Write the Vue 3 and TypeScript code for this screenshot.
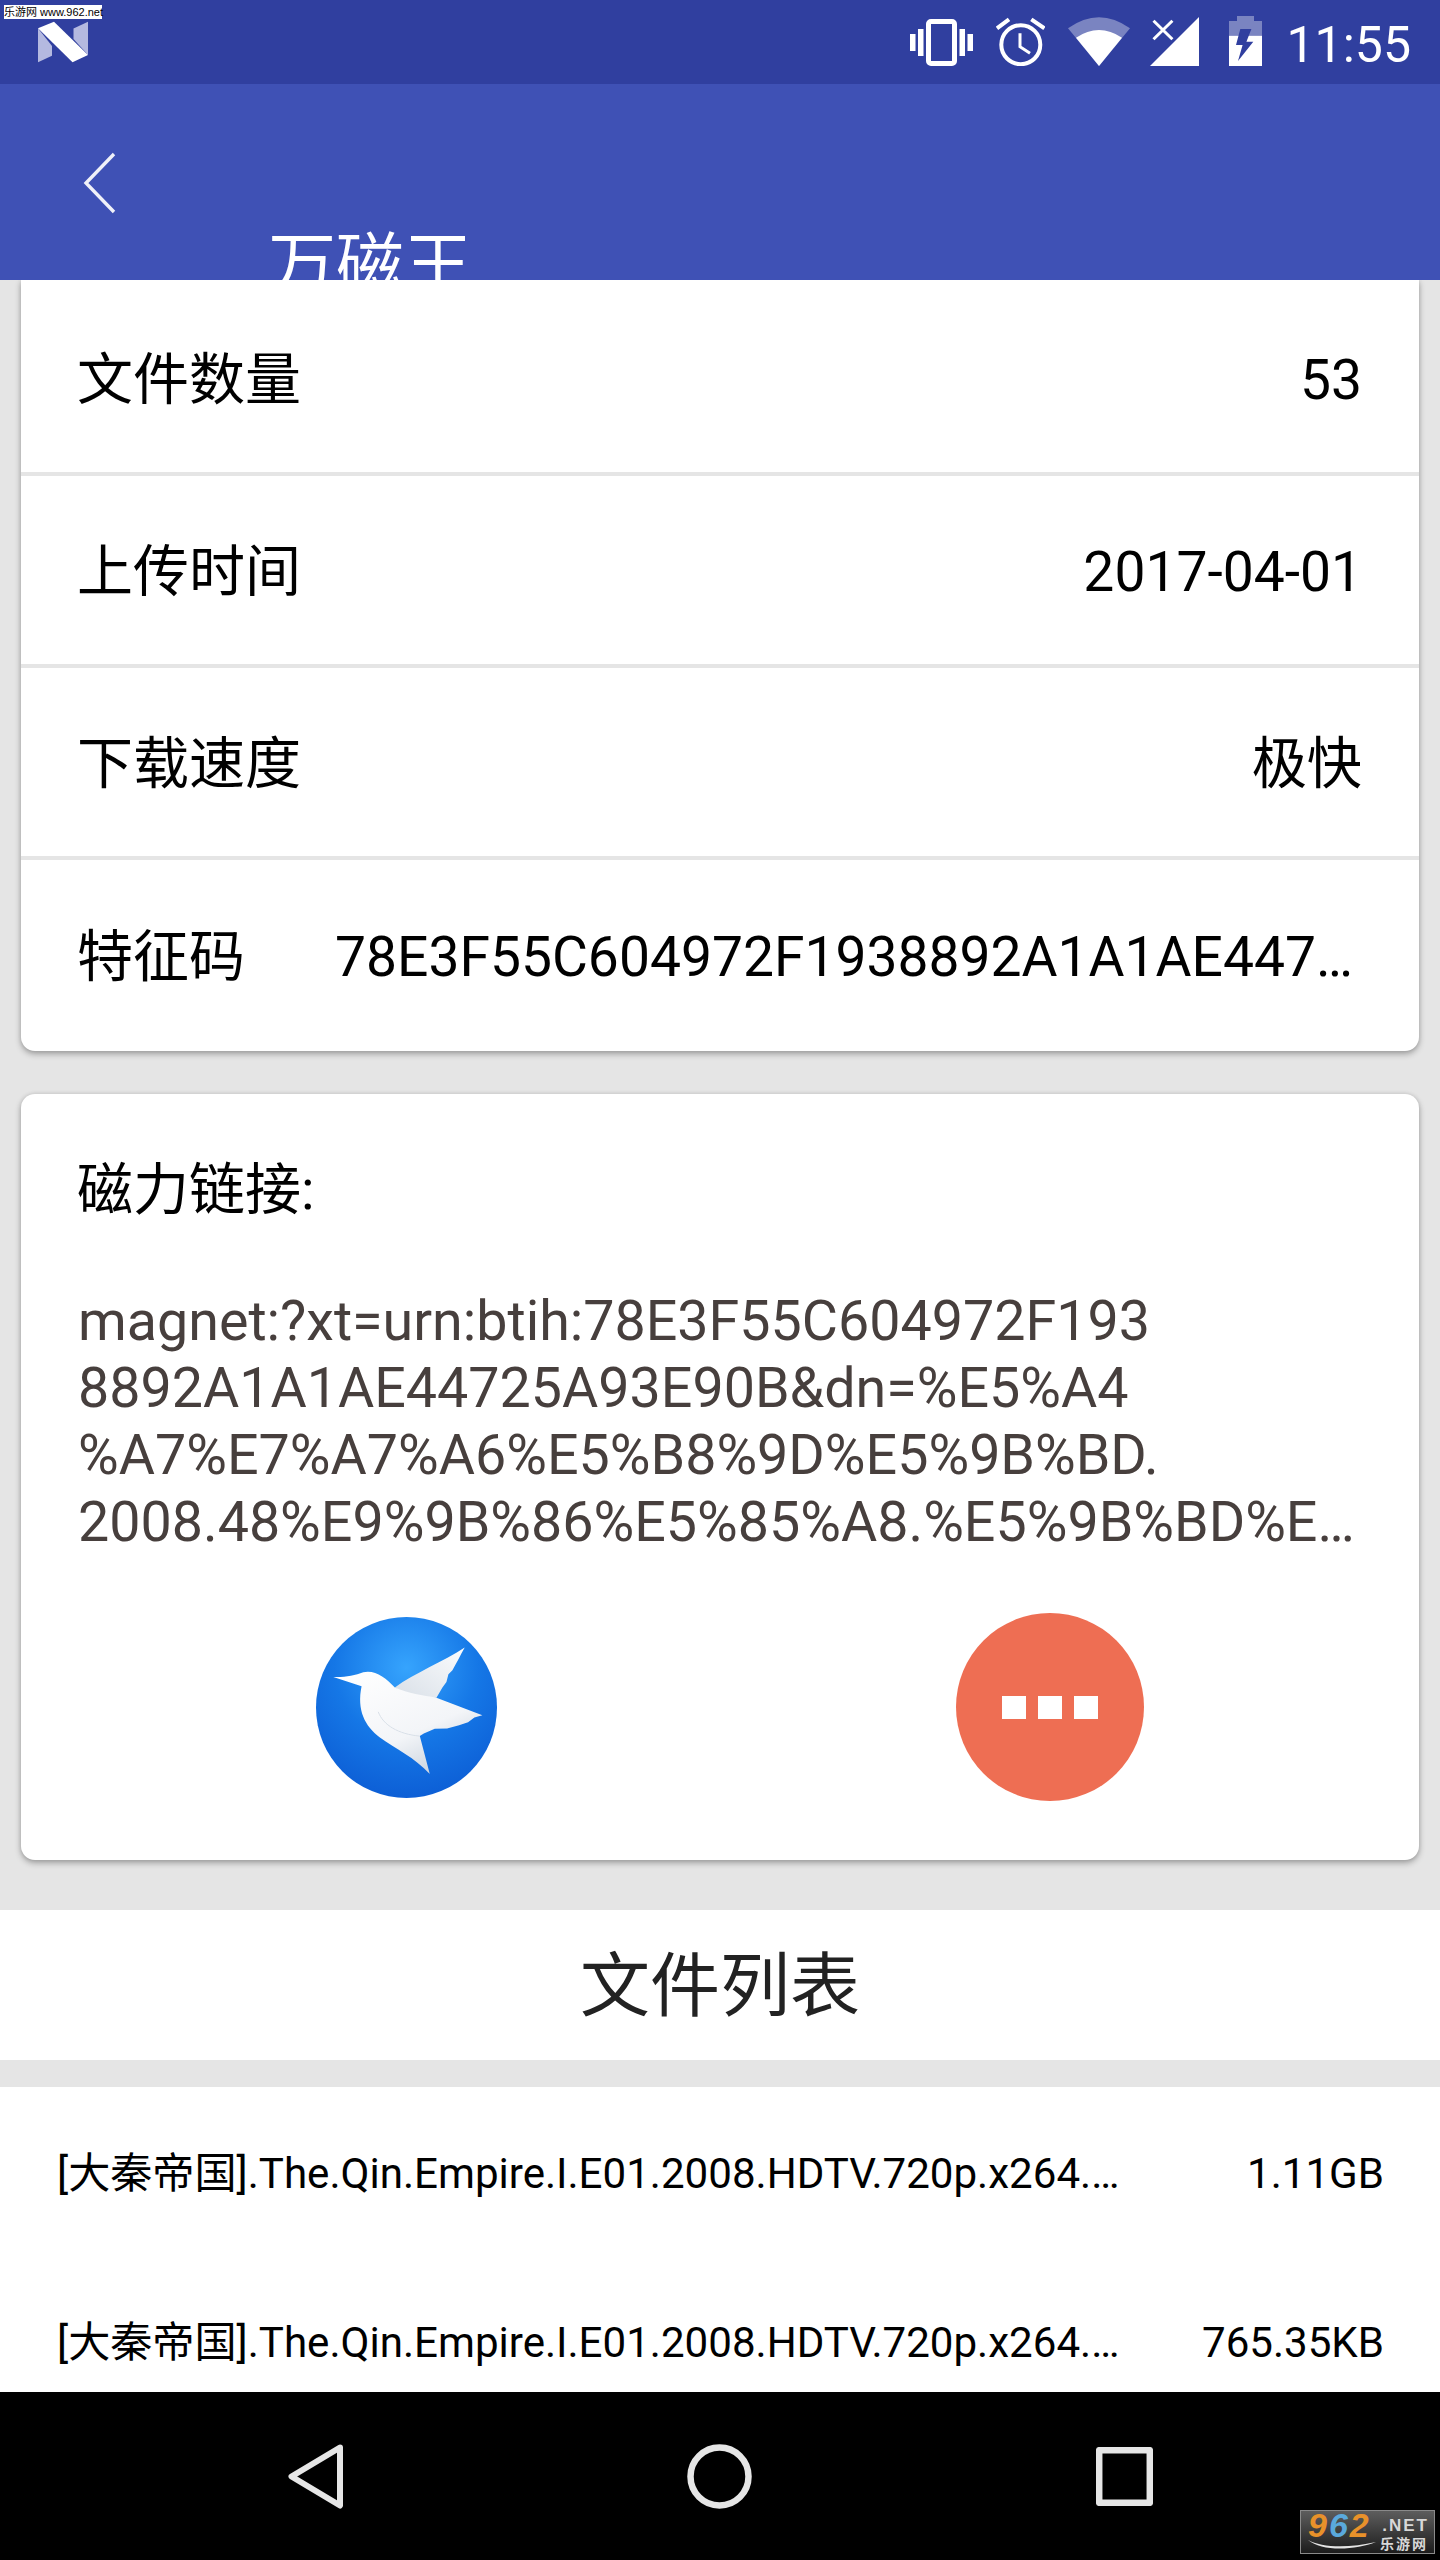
<script setup lang="ts">
interface InfoRow {
  label: string;
  value: string;
}

interface FileRow {
  name: string;
  size: string;
}

const infoRows: InfoRow[] = [
  { label: '文件数量', value: '53' },
  { label: '上传时间', value: '2017-04-01' },
  { label: '下载速度', value: '极快' },
  { label: '特征码', value: '78E3F55C604972F1938892A1A1AE44725A93E90B' },
];

const magnetLines = [
  'magnet:?xt=urn:btih:78E3F55C604972F193',
  '8892A1A1AE44725A93E90B&dn=%E5%A4',
  '%A7%E7%A7%A6%E5%B8%9D%E5%9B%BD.',
  '2008.48%E9%9B%86%E5%85%A8.%E5%9B%BD%E…',
];

const files: FileRow[] = [
  { name: '[大秦帝国].The.Qin.Empire.I.E01.2008.HDTV.720p.x264.AAC.mkv', size: '1.11GB' },
  { name: '[大秦帝国].The.Qin.Empire.I.E01.2008.HDTV.720p.x264.AAC.nfo', size: '765.35KB' },
];
</script>

<template>
  <div class="page">
    <div class="status-bar">
      <div class="mark">乐游网 www.962.net</div>
      <svg class="n-logo" width="50" height="42" viewBox="0 0 50 42">
        <path d="M0 7.3 14 25V34.7L0 41.3Z" fill="#b4b9e0" />
        <path d="M50 .7 35.5 7.5V18L50 34Z" fill="#b4b9e0" />
        <path d="M0 7.3 16 .7 50 34 34.5 41.3Z" fill="#fff" />
      </svg>
      <div class="status-icons">
        <svg class="ic-vibrate" width="63" height="47" viewBox="0 0 63 47" fill="#fff">
          <rect x="0" y="15" width="5.5" height="17" />
          <rect x="8" y="10" width="5.5" height="27" />
          <rect x="18.5" y="2.5" width="26" height="42" rx="2.5" fill="none" stroke="#fff" stroke-width="5" />
          <rect x="49.5" y="10" width="5.5" height="27" />
          <rect x="57.5" y="15" width="5.5" height="17" />
        </svg>
        <svg class="ic-alarm" width="49" height="49" viewBox="0 0 49 49" fill="none" stroke="#fff" stroke-width="4">
          <circle cx="24.8" cy="27.7" r="19.5" />
          <path d="M1 11.3 13 2.3M35.3 2.3 48.4 11.3" />
          <path d="M24 16.3V29.7L34 36.3" stroke-width="3" />
        </svg>
        <svg class="ic-wifi" width="62" height="49" viewBox="0 0 62 49">
          <path d="M0 11.3Q31-10.7 62 11.3L31 49Z" fill="#fff" fill-opacity=".36" />
          <path d="M8 20.7Q31 5.3 54 20.7L31 49Z" fill="#fff" />
        </svg>
        <svg class="ic-signal" width="49" height="49" viewBox="0 0 49 49">
          <path d="M0 49 49 0V49Z" fill="#fff" />
          <path d="M3.5 3.7 22.4 22.3M22.4 3.7 3.5 22.3" stroke="#fff" stroke-width="3" />
        </svg>
        <svg class="ic-battery" width="33" height="50" viewBox="0 0 33 50">
          <path d="M8 0H25V5H33V19.7H0V5H8Z" fill="#fff" fill-opacity=".36" />
          <path d="M0 19.7H33V50H0Z" fill="#fff" />
          <path d="M11.3 13H22.4L17.4 25.7H24.3L9 45 13.6 29H7Z" fill="#303f9f" />
        </svg>
        <span class="clock">11:55</span>
      </div>
    </div>

    <div class="app-bar">
      <svg class="back" width="34" height="62" viewBox="0 0 34 62" fill="none" stroke="#fff" stroke-width="3.4" stroke-opacity=".92">
        <path d="M31 2 3 31 31 60" />
      </svg>
      <div class="app-title">万磁王</div>
    </div>

    <div class="card info-card">
      <div v-for="row in infoRows" :key="row.label" class="info-row">
        <span class="info-label">{{ row.label }}</span>
        <span class="info-value">{{ row.value }}</span>
      </div>
    </div>

    <div class="card magnet-card">
      <div class="magnet-title">磁力链接:</div>
      <div class="magnet-text">
        <div v-for="line in magnetLines" :key="line">{{ line }}</div>
      </div>
      <div class="magnet-actions">
        <svg class="bird" width="181" height="181" viewBox="48 50 544 544">
          <defs>
            <radialGradient id="birdBg" cx="50%" cy="28%" r="72%">
              <stop offset="0" stop-color="#36a4fd" />
              <stop offset=".55" stop-color="#1577e6" />
              <stop offset="1" stop-color="#0d5fd6" />
            </radialGradient>
            <linearGradient id="birdBody" x1=".1" y1="0" x2=".75" y2="1">
              <stop offset="0" stop-color="#ffffff" />
              <stop offset=".62" stop-color="#f3f5f8" />
              <stop offset="1" stop-color="#c6d0dc" />
            </linearGradient>
            <linearGradient id="birdWing" x1="1" y1="0" x2="0" y2="1">
              <stop offset="0" stop-color="#fbfcfd" />
              <stop offset="1" stop-color="#d8dfe7" />
            </linearGradient>
          </defs>
          <circle cx="320" cy="322" r="272" fill="url(#birdBg)" />
          <path d="M285 262C345 218 430 185 495 142C482 165 470 190 458 210L446 222 440 245 428 262 410 293 340 300Z" fill="url(#birdWing)" />
          <path d="M100 230C130 232 165 226 190 216C225 208 258 232 285 262C325 280 370 285 410 293L548 345 524 352 505 366 478 375 442 385 405 386 372 400 360 408 390 522C345 472 285 445 240 412C195 378 170 330 185 258Z" fill="url(#birdBody)" />
          <path d="M235 335C250 375 295 402 360 408" fill="none" stroke="#d9e0e8" stroke-width="3" />
        </svg>
        <div class="more-btn">
          <i></i><i></i><i></i>
        </div>
      </div>
    </div>

    <div class="list-title">文件列表</div>

    <div class="file-list">
      <div v-for="file in files" :key="file.name" class="file-row">
        <span class="file-name">{{ file.name }}</span>
        <span class="file-size">{{ file.size }}</span>
      </div>
    </div>

    <div class="nav-bar">
      <svg width="55" height="65" viewBox="0 0 55 65" fill="none" stroke="#e6e6e6" stroke-width="6" stroke-linejoin="round">
        <path d="M52 3.5 3.5 32.5 52 61.5Z" />
      </svg>
      <svg width="65" height="65" viewBox="0 0 65 65" fill="none" stroke="#e6e6e6" stroke-width="6.5">
        <circle cx="32.5" cy="32.5" r="29" />
      </svg>
      <svg width="57" height="59" viewBox="0 0 57 59" fill="none" stroke="#e6e6e6" stroke-width="6.5" stroke-linejoin="round">
        <rect x="3.2" y="3.2" width="50.6" height="52.6" />
      </svg>
      <div class="badge">
        <div class="badge-left">
          <span class="badge-num"><b class="o">9</b><b class="b">6</b><b class="o">2</b></span>
          <svg class="swoosh" width="68" height="10" viewBox="0 0 68 10">
            <path d="M0 0C14 8 42 8 68 2 48 10 14 12 0 0Z" fill="#e4e4e4" />
          </svg>
        </div>
        <div class="badge-side">
          <span class="badge-net">.NET</span>
          <span class="badge-cn">乐游网</span>
        </div>
      </div>
    </div>
  </div>
</template>

<style scoped>
.page {
  position: relative;
  width: 1440px;
  height: 2560px;
  display: flex;
  flex-direction: column;
  overflow: hidden;
  background: #e5e5e5;
  font-family: Roboto, "Noto Sans CJK SC", sans-serif;
  color: #000;
}

.status-bar {
  position: relative;
  height: 84px;
  flex: none;
  display: flex;
  justify-content: space-between;
  align-items: flex-start;
  padding: 21px 29px 0 38px;
  box-sizing: border-box;
  background: #303f9f;
}

.mark {
  position: absolute;
  left: 4px;
  top: 5px;
  width: 98px;
  height: 14px;
  background: #fff;
  color: #000;
  font-family: "Liberation Sans", "Noto Sans CJK SC", sans-serif;
  font-size: 11px;
  line-height: 14px;
  text-align: center;
  white-space: nowrap;
}

.status-icons {
  display: flex;
  align-items: flex-start;
  margin-top: -5px;
}

.ic-vibrate { margin-top: 3px; }
.ic-alarm { margin-top: 1px; margin-left: 23px; }
.ic-wifi { margin-top: 1px; margin-left: 23px; }
.ic-signal { margin-top: 1px; margin-left: 20px; }
.ic-battery { margin-left: 30px; }

.clock {
  margin-left: 24px;
  font-size: 50px;
  line-height: 58px;
  color: #fff;
}

.app-bar {
  position: relative;
  z-index: 2;
  height: 196px;
  flex: none;
  padding: 68px 0 0 83px;
  box-sizing: border-box;
  overflow: hidden;
  background: #3f51b5;
}

.back {
  display: block;
}

.app-title {
  margin: 14px 0 0 185px;
  font-size: 68px;
  line-height: 76px;
  color: #fff;
}

.card {
  flex: none;
  margin: 0 21px;
  background: #fff;
  box-shadow: 0 3px 6px rgba(0, 0, 0, 0.3), 0 0 4px rgba(0, 0, 0, 0.1);
}

.info-card {
  padding-top: 4px;
  border-radius: 0 0 14px 14px;
}

.info-row {
  height: 192px;
  box-sizing: border-box;
  display: flex;
  align-items: center;
  justify-content: space-between;
  gap: 90px;
  padding: 3px 57px 0 56px;
  border-bottom: 4px solid #e5e5e5;
  line-height: 66px;
}

.info-row:last-child {
  height: 191px;
  border-bottom: none;
}

.info-label {
  flex: none;
  font-size: 56px;
}

.info-value {
  min-width: 0;
  overflow: hidden;
  font-size: 55.2px;
  text-overflow: ellipsis;
  white-space: nowrap;
}

.magnet-card {
  margin-top: 43px;
  height: 766px;
  box-sizing: border-box;
  padding: 63px 48px 0 57px;
  border-radius: 14px;
}

.magnet-title {
  margin-left: -1px;
  font-size: 56px;
  line-height: 66px;
}

.magnet-text {
  margin-top: 65px;
  font-size: 55.6px;
  line-height: 67px;
  color: #473f3d;
  white-space: nowrap;
}

.magnet-actions {
  margin: 57px 0 0 7px;
  display: grid;
  grid-template-columns: 643px 643px;
  justify-items: center;
  align-items: center;
  height: 188px;
}

.more-btn {
  width: 188px;
  height: 188px;
  border-radius: 50%;
  background: #ee6e53;
  display: flex;
  align-items: center;
  justify-content: center;
  gap: 12px;
}

.more-btn i {
  display: block;
  width: 24px;
  height: 23px;
  background: #fff;
}

.list-title {
  flex: none;
  margin-top: 50px;
  height: 150px;
  background: #fff;
  text-align: center;
  font-size: 70px;
  line-height: 154px;
  color: #222;
}

.file-list {
  flex: 1;
  min-height: 0;
  margin-top: 27px;
  padding-top: 2px;
  overflow: hidden;
  background: #fff;
}

.file-row {
  height: 169px;
  display: flex;
  align-items: center;
  justify-content: space-between;
  padding: 0 56px 0 57px;
  font-size: 42.1px;
  line-height: 56px;
}

.file-name {
  width: 1063px;
  overflow: hidden;
  text-overflow: ellipsis;
  white-space: nowrap;
}

.nav-bar {
  position: relative;
  flex: none;
  height: 168px;
  display: flex;
  align-items: center;
  justify-content: center;
  gap: 344px;
  background: #000;
}

.badge {
  position: absolute;
  right: 5px;
  bottom: 6px;
  width: 135px;
  height: 44px;
  box-sizing: border-box;
  display: flex;
  gap: 2px;
  padding: 0 2px 0 7px;
  overflow: hidden;
  border: 1px solid #8a8a8a;
  background: linear-gradient(#5d5d5d, #1c1c1c);
  white-space: nowrap;
}

.badge-left {
  display: flex;
  flex-direction: column;
  width: 70px;
}

.badge-num {
  height: 28px;
  font-family: "Liberation Sans", sans-serif;
  font-size: 34px;
  font-style: italic;
  line-height: 28px;
  letter-spacing: 2px;
}

.swoosh {
  display: block;
  margin-top: 1px;
}

.badge-num b.o { color: #e8912a; }
.badge-num b.b { color: #5aa9dc; }

.badge-side {
  display: flex;
  flex-direction: column;
  align-items: flex-end;
  color: #d8d8d8;
  font-family: "Liberation Sans", "Noto Sans CJK SC", sans-serif;
  font-weight: 700;
}

.badge-net {
  margin-top: 6px;
  font-size: 17px;
  line-height: 17px;
  letter-spacing: 2px;
}

.badge-cn {
  margin: 2px 1px 0 0;
  font-size: 14px;
  line-height: 16px;
  letter-spacing: 2px;
}
</style>
